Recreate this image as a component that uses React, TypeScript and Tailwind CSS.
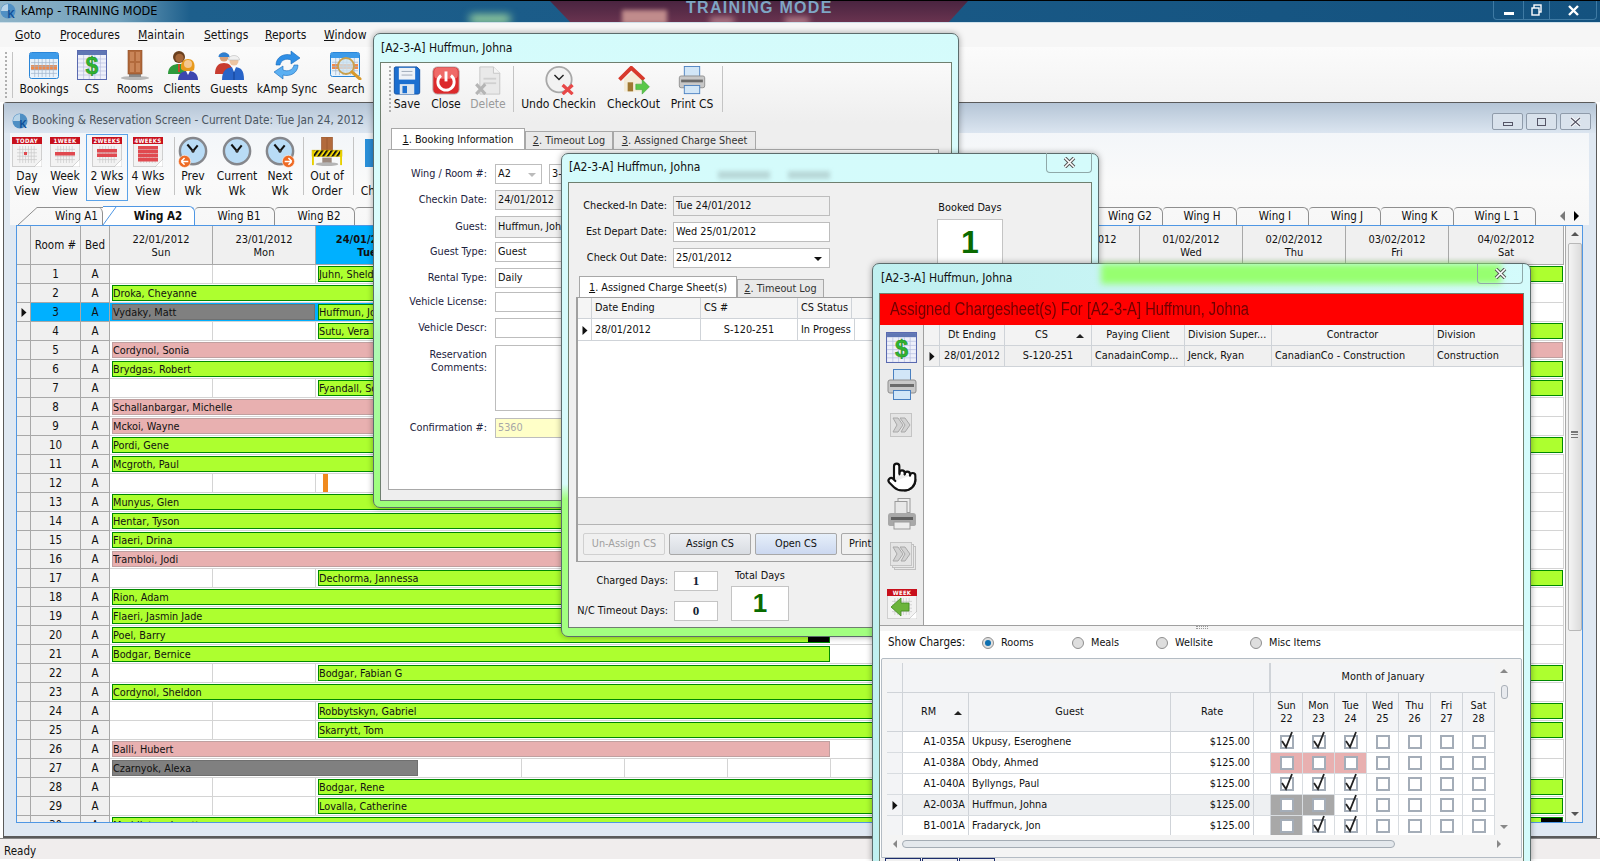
import { Pointer } from "lucide-react";

const dates = [
  ["22/01/2012", "Sun"], ["23/01/2012", "Mon"], ["24/01/2012", "Tue"], ["25/01/2012", "Wed"], ["26/01/2012", "Thu"],
  ["27/01/2012", "Fri"], ["28/01/2012", "Sat"], ["29/01/2012", "Sun"], ["30/01/2012", "Mon"], ["31/01/2012", "Tue"],
  ["01/02/2012", "Wed"], ["02/02/2012", "Thu"], ["03/02/2012", "Fri"], ["04/02/2012", "Sat"],
];

const colW = (i: number) => (i === 13 ? 115 : 103);

type Bar = { name: string; start: number; span: number; kind: "g" | "p" | "x"; tail?: boolean };
const rows: { n: number; bars: Bar[]; marker?: boolean; selected?: boolean }[] = [
  { n: 1, bars: [{ name: "Juhn, Sheldon", start: 2, span: 12, kind: "g" }] },
  { n: 2, bars: [{ name: "Droka, Cheyanne", start: 0, span: 8, kind: "g" }] },
  { n: 3, selected: true, bars: [{ name: "Vydaky, Matt", start: 0, span: 2, kind: "x" }, { name: "Huffmun, Johna", start: 2, span: 3, kind: "g" }] },
  { n: 4, bars: [{ name: "Sutu, Vera", start: 2, span: 12, kind: "g" }] },
  { n: 5, bars: [{ name: "Cordynol, Sonia", start: 0, span: 14, kind: "p" }] },
  { n: 6, bars: [{ name: "Brydgas, Robert", start: 0, span: 14, kind: "g" }] },
  { n: 7, bars: [{ name: "Fyandall, Scott", start: 2, span: 12, kind: "g" }] },
  { n: 8, bars: [{ name: "Schallanbargar, Michelle", start: 0, span: 7, kind: "p" }] },
  { n: 9, bars: [{ name: "Mckoi, Wayne", start: 0, span: 7, kind: "p" }] },
  { n: 10, bars: [{ name: "Pordi, Gene", start: 0, span: 14, kind: "g" }] },
  { n: 11, bars: [{ name: "Mcgroth, Paul", start: 0, span: 7, kind: "g" }] },
  { n: 12, marker: true, bars: [] },
  { n: 13, bars: [{ name: "Munyus, Glen", start: 0, span: 7, kind: "g" }] },
  { n: 14, bars: [{ name: "Hentar, Tyson", start: 0, span: 7, kind: "g" }] },
  { n: 15, bars: [{ name: "Flaeri, Drina", start: 0, span: 7, kind: "g" }] },
  { n: 16, bars: [{ name: "Trambloi, Jodi", start: 0, span: 7, kind: "p" }] },
  { n: 17, bars: [{ name: "Dechorma, Jannessa", start: 2, span: 12, kind: "g" }] },
  { n: 18, bars: [{ name: "Rion, Adam", start: 0, span: 7, kind: "g" }] },
  { n: 19, bars: [{ name: "Flaeri, Jasmin Jade", start: 0, span: 7, kind: "g" }] },
  { n: 20, bars: [{ name: "Poel, Barry", start: 0, span: 7, kind: "g", tail: true }] },
  { n: 21, bars: [{ name: "Bodgar, Bernice", start: 0, span: 7, kind: "g" }] },
  { n: 22, bars: [{ name: "Bodgar, Fabian G", start: 2, span: 12, kind: "g" }] },
  { n: 23, bars: [{ name: "Cordynol, Sheldon", start: 0, span: 9, kind: "g" }] },
  { n: 24, bars: [{ name: "Robbytskyn, Gabriel", start: 2, span: 12, kind: "g" }] },
  { n: 25, bars: [{ name: "Skarrytt, Tom", start: 2, span: 12, kind: "g" }] },
  { n: 26, bars: [{ name: "Balli, Hubert", start: 0, span: 7, kind: "p" }] },
  { n: 27, bars: [{ name: "Czarnyok, Alexa", start: 0, span: 3, kind: "x" }] },
  { n: 28, bars: [{ name: "Bodgar, Rene", start: 2, span: 12, kind: "g" }] },
  { n: 29, bars: [{ name: "Lovalla, Catherine", start: 2, span: 12, kind: "g" }] },
  { n: 30, bars: [{ name: "Meddleton, Janette", start: 0, span: 14, kind: "g", tail: true }] },
];

const charges = [
  { rm: "A1-035A", guest: "Ukpusy, Eseroghene", checks: [1, 1, 1, 0, 0, 0, 0], tint: [0, 0, 0] },
  { rm: "A1-038A", guest: "Obdy, Ahmed", checks: [0, 0, 0, 0, 0, 0, 0], tint: [1, 1, 1] },
  { rm: "A1-040A", guest: "Byllyngs, Paul", checks: [1, 1, 1, 0, 0, 0, 0], tint: [0, 0, 0] },
  { rm: "A2-003A", guest: "Huffmun, Johna", checks: [0, 0, 1, 0, 0, 0, 0], tint: [2, 2, 0], current: true },
  { rm: "B1-001A", guest: "Fradaryck, Jon", checks: [0, 1, 1, 0, 0, 0, 0], tint: [2, 0, 0] },
];

/* ---------- icons ---------- */

function GridLines({ x, y, w, h, nx, ny, c }: { x: number; y: number; w: number; h: number; nx: number; ny: number; c: string }) {
  const v = Array.from({ length: nx - 1 }, (_, i) => x + ((i + 1) * w) / nx);
  const z = Array.from({ length: ny - 1 }, (_, i) => y + ((i + 1) * h) / ny);
  return (
    <g stroke={c} strokeWidth="0.7">
      {v.map((a) => <line key={a} x1={a} y1={y} x2={a} y2={y + h} />)}
      {z.map((a) => <line key={a} x1={x} y1={a} x2={x + w} y2={a} />)}
    </g>
  );
}

function Calendar() {
  return (
    <svg width="30" height="30" viewBox="0 0 30 30">
      <rect x="0.5" y="2.5" width="29" height="26" rx="2" fill="#e8f2fb" stroke="#2a86d8" />
      <rect x="1" y="3" width="28" height="6" fill="#3d9be9" />
      <rect x="2" y="15" width="26" height="5" fill="#f08a4b" />
      <GridLines x={2} y={9} w={26} h={18} nx={7} ny={5} c="#9fb4cc" />
    </svg>
  );
}

function DollarSheet({ size = 30 }: { size?: number }) {
  return (
    <svg width={size} height={size} viewBox="0 0 30 30">
      <rect x="0.5" y="0.5" width="29" height="29" fill="#eef0fa" stroke="#5a6ab0" />
      <rect x="1" y="1" width="28" height="4" fill="#5f76b4" />
      <GridLines x={1} y={5} w={28} h={24} nx={5} ny={6} c="#b7bfe0" />
      <text x="15" y="24" textAnchor="middle" fontSize="23" fontWeight="700" fontFamily="Liberation Sans" fill="#2fb52f" stroke="#1c7f1c" strokeWidth="0.4">$</text>
    </svg>
  );
}

function Door() {
  return (
    <svg width="30" height="30" viewBox="0 0 30 30">
      <ellipse cx="15" cy="28" rx="14" ry="2" fill="#b8b8b8" />
      <rect x="9" y="24" width="12" height="3" fill="#8a8a8a" />
      <rect x="8" y="0" width="14" height="24" fill="#b26a3c" stroke="#8a4c24" strokeWidth="0.6" />
      <rect x="10" y="2" width="4" height="9" fill="#c98558" />
      <rect x="16" y="2" width="4" height="9" fill="#c98558" />
      <rect x="10" y="13" width="4" height="9" fill="#c98558" />
      <rect x="16" y="13" width="4" height="9" fill="#c98558" />
    </svg>
  );
}

function Clients() {
  return (
    <svg width="32" height="30" viewBox="0 0 32 30">
      <circle cx="13" cy="7" r="6" fill="#6a3f1e" />
      <circle cx="13.5" cy="8" r="4.2" fill="#a5673a" />
      <path d="M2 24 C2 16 8 14 13 14 C18 14 22 16 22 24 Z" fill="#2f9a3c" />
      <path d="M12 14 L14 14 L14 22 L12 22 Z" fill="#c84a28" />
      <path d="M15 19 C14 12 18 9 22 9 C26 9 30 12 28 20 C26 22 17 22 15 19 Z" fill="#e89a1c" />
      <circle cx="22" cy="14" r="4" fill="#f5c890" />
      <path d="M12 30 C12 23 17 21 22 21 C27 21 32 23 32 30 Z" fill="#3c46b0" />
      <path d="M20 21 L22 25 L24 21 Z" fill="#fff" />
    </svg>
  );
}

function Guests() {
  return (
    <svg width="30" height="30" viewBox="0 0 30 30">
      <circle cx="10" cy="7" r="4.5" fill="#d9a078" />
      <path d="M4.5 7 C4.5 1 15.5 1 15.5 7 Z" fill="#2f7fd0" />
      <path d="M1 24 C1 16 5 13 10 13 C15 13 19 16 19 24 Z" fill="#c83c30" />
      <circle cx="20" cy="11" r="4.5" fill="#edc4a0" />
      <path d="M14.5 10 C14.5 4 25.5 4 25.5 10 Z" fill="#f0f0f0" stroke="#b0b0b0" strokeWidth="0.5" />
      <path d="M8 30 C8 20 13 17 20 17 C27 17 30 20 30 30 Z" fill="#2864c8" />
      <path d="M18 17 L20 22 L22 17 Z" fill="#fff" />
      <line x1="20" y1="22" x2="20" y2="30" stroke="#123f8f" />
    </svg>
  );
}

function Sync() {
  return (
    <svg width="34" height="30" viewBox="0 0 34 30">
      <path d="M6 15 C6 7 14 3 21 5 L21 1 L30 8 L21 14 L21 10 C16 8 11 10 10 15 Z" fill="#2f8fe6" stroke="#1468bb" strokeWidth="0.6" />
      <path d="M28 15 C28 23 20 27 13 25 L13 29 L4 22 L13 16 L13 20 C18 22 23 20 24 15 Z" fill="#5cb0f2" stroke="#1468bb" strokeWidth="0.6" />
    </svg>
  );
}

function SearchCal() {
  return (
    <svg width="32" height="30" viewBox="0 0 32 30">
      <rect x="0.5" y="2.5" width="29" height="24" rx="2" fill="#e8f2fb" stroke="#2a86d8" />
      <rect x="1" y="3" width="28" height="5" fill="#3d9be9" />
      <rect x="2" y="14" width="26" height="5" fill="#f08a4b" />
      <GridLines x={2} y={8} w={26} h={17} nx={7} ny={4} c="#9fb4cc" />
      <circle cx="16" cy="16" r="8" fill="#cfe4f2" fillOpacity="0.75" stroke="#c9a04c" strokeWidth="1.8" />
      <line x1="22" y1="22" x2="30" y2="29" stroke="#d89a2c" strokeWidth="3" strokeLinecap="round" />
    </svg>
  );
}

function WeekSheet({ label, cells, children }: { label: string; cells?: number[][]; children?: React.ReactNode }) {
  return (
    <svg width="30" height="30" viewBox="0 0 30 30">
      <rect x="0.5" y="6.5" width="29" height="23" fill="#f3f3f3" stroke="#cfcfcf" />
      <GridLines x={5} y={9} w={20} h={17} nx={7} ny={5} c="#c8c8c8" />
      {cells?.map((c) => <rect key={c.join()} x={c[0]} y={c[1]} width={c[2]} height={c[3]} fill="#e0494f" />)}
      <rect x="0" y="0" width="30" height="7" fill="#c8101c" />
      <text x="15" y="6" textAnchor="middle" fontSize="6" fontWeight="700" fontFamily="DejaVu Sans" letterSpacing="0.3" fill="#fff">{label}</text>
      <path d="M22 30 L30 22 L30 30 Z" fill="#fff" stroke="#bbb" strokeWidth="0.6" />
      {children}
    </svg>
  );
}

function Clock({ badge }: { badge?: "l" | "r" }) {
  return (
    <svg width="32" height="32" viewBox="0 0 32 32" className="overflow-visible">
      <circle cx="16" cy="15" r="14" fill="#b9dcf6" stroke="#85878c" strokeWidth="2.6" />
      <path d="M10 8 L16 15 L21 9" fill="none" stroke="#111" strokeWidth="2.2" />
      <circle cx="16" cy="15" r="1.8" fill="#333" />
      {badge === "l" && (
        <g>
          <circle cx="7" cy="26" r="6.5" fill="#ee6a24" stroke="#fff" strokeWidth="0.6" />
          <path d="M3.5 26 L7 22.5 M3.5 26 L7 29.5 M3.5 26 L11 26" stroke="#fff" strokeWidth="1.6" fill="none" />
        </g>
      )}
      {badge === "r" && (
        <g>
          <circle cx="25" cy="26" r="6.5" fill="#ee6a24" stroke="#fff" strokeWidth="0.6" />
          <path d="M28.5 26 L25 22.5 M28.5 26 L25 29.5 M28.5 26 L21 26" stroke="#fff" strokeWidth="1.6" fill="none" />
        </g>
      )}
    </svg>
  );
}

function OutOfOrder() {
  return (
    <svg width="32" height="32" viewBox="0 0 32 32">
      <defs>
        <pattern id="hazard" width="5" height="6" patternUnits="userSpaceOnUse" patternTransform="skewX(-35)">
          <rect width="5" height="6" fill="#f4d800" />
          <rect width="2.5" height="6" fill="#111" />
        </pattern>
      </defs>
      <rect x="10" y="0" width="12" height="15" fill="#b26a3c" stroke="#8a4c24" strokeWidth="0.5" />
      <line x1="16" y1="1" x2="16" y2="15" stroke="#8a4c24" strokeWidth="0.5" />
      <rect x="11" y="22" width="10" height="6" fill="#9c8a80" />
      <ellipse cx="16" cy="29" rx="12" ry="2" fill="#b5b5b5" />
      <rect x="0" y="14" width="32" height="7" fill="url(#hazard)" stroke="#c8b000" strokeWidth="0.5" />
      <rect x="0" y="14" width="2" height="16" fill="#e8d000" />
      <rect x="30" y="14" width="2" height="16" fill="#e8d000" />
    </svg>
  );
}

function Save() {
  return (
    <svg width="30" height="32" viewBox="0 0 30 32">
      <path d="M2 1 H26 L29 4 V29 Q29 31 27 31 H3 Q1 31 1 29 V2 Z" fill="#1c6fd0" stroke="#114e9f" />
      <rect x="6" y="2" width="18" height="13" fill="#eef2f7" />
      <line x1="9" y1="6" x2="21" y2="6" stroke="#9aa6b5" />
      <line x1="9" y1="10" x2="21" y2="10" stroke="#9aa6b5" />
      <rect x="7" y="20" width="16" height="11" fill="#dfe6ee" />
      <rect x="10" y="22" width="5" height="8" fill="#1c6fd0" />
    </svg>
  );
}

function PowerBtn() {
  return (
    <svg width="30" height="32" viewBox="0 0 30 32">
      <rect x="0.5" y="1" width="29" height="30" rx="5" fill="#dc2a2c" stroke="#b8b0b0" />
      <rect x="2" y="2" width="26" height="12" rx="4" fill="#ef6a68" />
      <path d="M9.5 10.5 A9 9 0 1 0 20.5 10.5" fill="none" stroke="#fff" strokeWidth="3.2" />
      <line x1="15" y1="6" x2="15" y2="17" stroke="#fff" strokeWidth="3.2" />
    </svg>
  );
}

function DeleteDoc() {
  return (
    <svg width="30" height="32" viewBox="0 0 30 32">
      <path d="M6 1 H21 L28 8 V31 H6 Z" fill="#e9e9e9" stroke="#c4c4c4" />
      <path d="M21 1 V8 H28" fill="#f5f5f5" stroke="#c4c4c4" />
      <line x1="10" y1="14" x2="24" y2="14" stroke="#d0d0d0" strokeWidth="2" />
      <line x1="10" y1="19" x2="24" y2="19" stroke="#d0d0d0" strokeWidth="2" />
      <path d="M2 20 L12 31 M12 20 L2 31" stroke="#b5b5b5" strokeWidth="3.4" />
    </svg>
  );
}

function UndoClock() {
  return (
    <svg width="32" height="32" viewBox="0 0 32 32">
      <circle cx="16" cy="15" r="14" fill="#f2f2f2" stroke="#a8a8a8" strokeWidth="2" />
      <path d="M11 10 L16 15 L21 10" fill="none" stroke="#222" strokeWidth="1.6" />
      <path d="M20 21 L31 31 M31 21 L20 31" stroke="#e84848" strokeWidth="3.6" />
    </svg>
  );
}

function CheckOut() {
  return (
    <svg width="34" height="32" viewBox="0 0 34 32">
      <path d="M6 14 L17 5 L25 13 V28 H6 Z" fill="#f4ecd8" />
      <path d="M1 15 L14 2 L28 15" fill="none" stroke="#d83a2c" strokeWidth="4.2" />
      <rect x="10" y="18" width="6" height="10" fill="#a07830" />
      <path d="M19 20 H26 V15 L34 23 L26 31 V26 H19 Z" fill="#58c848" stroke="#3a9c30" strokeWidth="0.6" />
    </svg>
  );
}

function PrinterIcon({ size = 30 }: { size?: number }) {
  return (
    <svg width={size} height={size} viewBox="0 0 30 32">
      <rect x="6.5" y="0.5" width="17" height="11" fill="#d2e6f7" stroke="#4a80c0" />
      <path d="M1 13 Q1 11 3 11 H27 Q29 11 29 13 V22 Q29 24 27 24 H3 Q1 24 1 22 Z" fill="#c8c8c8" stroke="#8e8e8e" />
      <rect x="3" y="15" width="24" height="3" fill="#6b6b6b" />
      <rect x="6.5" y="21.5" width="17" height="9" fill="#d2e6f7" stroke="#4a80c0" />
    </svg>
  );
}

function PrinterGray() {
  return (
    <svg width="30" height="32" viewBox="0 0 30 32">
      <rect x="11" y="0.5" width="12" height="14" fill="#eee" stroke="#9a9a9a" />
      <rect x="8" y="3.5" width="12" height="14" fill="#e8e8e8" stroke="#9a9a9a" />
      <path d="M1 18 Q1 15 4 15 H26 Q29 15 29 18 V26 Q29 28 26 28 H4 Q1 28 1 26 Z" fill="#a8a8a8" />
      <rect x="4" y="19" width="22" height="3" fill="#606060" />
      <rect x="7" y="24" width="16" height="7" fill="#ececec" stroke="#9a9a9a" />
    </svg>
  );
}

function Forward({ stack }: { stack?: boolean }) {
  return (
    <svg width="28" height="28" viewBox="0 0 28 28">
      {stack && <rect x="5.5" y="4.5" width="21" height="23" fill="#e8e8e8" stroke="#c0c0c0" />}
      {stack && <rect x="3.5" y="2.5" width="21" height="23" fill="#e8e8e8" stroke="#c0c0c0" />}
      <rect x="1.5" y="0.5" width="21" height="23" fill="#e4e4e4" stroke="#c4c4c4" />
      <path d="M4 5 H9 L14 12 L9 19 H4 L8 12 Z M11 5 L16 5 L21 12 L16 19 H12 L16 12 Z" fill="#d2d2d2" stroke="#a8a8a8" />
    </svg>
  );
}

function WeekBack() {
  return (
    <WeekSheet label="WEEK">
      <path d="M4 18 L14 9 V14 H22 V22 H14 V27 Z" fill="#6cb43c" stroke="#3f8a20" strokeWidth="0.8" />
    </WeekSheet>
  );
}

function KLogo() {
  return (
    <svg width="17" height="17" viewBox="0 0 17 17">
      <circle cx="8" cy="8" r="7.5" fill="#4f8fc4" />
      <path d="M8 1 A7 7 0 0 0 1 8 L8 8 Z" fill="#b8d4e8" />
      <text x="11" y="15" textAnchor="middle" fontSize="10" fontWeight="700" fontFamily="Liberation Sans" fill="#0f4f98">K</text>
    </svg>
  );
}

const Arrow = () => (
  <svg width="6" height="9" viewBox="0 0 6 9"><path d="M0.5 0 L5.5 4.5 L0.5 9 Z" fill="#111" /></svg>
);

/* ---------- shared bits ---------- */

function ToolItem({ w, label, icon, h = 30, dim }: { w: number; label: string; icon: React.ReactNode; h?: number; dim?: boolean }) {
  return (
    <div className="flex flex-col items-center shrink-0" style={{ width: w }}>
      <div className="flex items-end justify-center [&>svg]:max-h-full" style={{ height: h }}>{icon}</div>
      <div className={`mt-[2px] text-center text-[12px] leading-[15px] whitespace-pre ${dim ? "text-[#9a9a9a]" : "text-[#111]"}`}>{label}</div>
    </div>
  );
}

const Sep = ({ w, h = "h-[58px]" }: { w: number; h?: string }) => (
  <div className="shrink-0 flex justify-center" style={{ width: w }}>
    <div className={`w-px bg-[#c4c4c4] ${h}`} />
  </div>
);

function TabBtn({ active, n, text, w }: { active?: boolean; n: string; text: string; w: number }) {
  return (
    <div
      className={`shrink-0 flex items-center justify-center pt-[2px] border border-b-0 border-[#a8a8a8] ${active ? "bg-white h-[21px] z-10 text-[#111]" : "bg-[#e9e9e9] h-[18px] text-[#333]"}`}
      style={{ width: w }}
    >
      <span><u>{n}</u>. {text}</span>
    </div>
  );
}

function Box({ w, h = 20, children, bg = "bg-white", cls = "" }: { w?: number; h?: number; children?: React.ReactNode; bg?: string; cls?: string }) {
  return (
    <div className={`flex items-center px-[2px] pt-px border border-[#bdbdbd] shrink-0 whitespace-nowrap overflow-hidden ${bg} ${cls}`} style={{ width: w, height: h }}>
      {children}
    </div>
  );
}

function CloseBtn({ w = 46 }: { w?: number }) {
  return (
    <div className="h-[20px] flex items-center justify-center border border-t-0 border-[#8fa8a8] rounded-b-[4px]" style={{ width: w }}>
      <svg width="13" height="11" viewBox="0 0 13 11"><path d="M2 1 L11 10 M11 1 L2 10" stroke="#555" strokeWidth="3.6" /><path d="M2 1 L11 10 M11 1 L2 10" stroke="#fff" strokeWidth="1.6" /></svg>
    </div>
  );
}

function HeadCell({ w, children, cls = "" }: { w?: number; children?: React.ReactNode; cls?: string }) {
  return (
    <div className={`flex items-center shrink-0 border-r border-[#cfd3d8] px-[3px] pt-px whitespace-nowrap overflow-hidden ${cls}`} style={{ width: w }}>
      {children}
    </div>
  );
}

function Radio({ on, label, w }: { on?: boolean; label: string; w: number }) {
  return (
    <div className="flex items-center gap-[7px] shrink-0" style={{ width: w }}>
      <span className="w-[12px] h-[12px] rounded-full border border-[#8f8f8f] bg-[#dedede] flex items-center justify-center">
        {on && <span className="w-[6px] h-[6px] rounded-full bg-[#0c6fb0]" />}
      </span>
      <span>{label}</span>
    </div>
  );
}

function Check({ on }: { on: number }) {
  return (
    <span className="relative w-[14px] h-[14px] border-2 border-[#a4adb8] bg-white block">
      {on === 1 && (
        <svg width="14" height="18" viewBox="0 0 14 18" className="absolute left-[-2px] top-[-6px]">
          <path d="M2 10 L6 16 L12 1" fill="none" stroke="#222" strokeWidth="1.8" />
        </svg>
      )}
    </span>
  );
}

/* ---------- main window chrome ---------- */

function TitleBar() {
  return (
    <div className="relative h-[23px] shrink-0 border-t border-black border-b border-b-[#cfe0ea] bg-[linear-gradient(90deg,#8fb4c8_0px,#6f9fba_120px,#1d5f8c_190px,#14527f_1600px)] overflow-hidden">
      <div className="absolute left-[470px] top-[14px] w-[40px] h-[8px] bg-[#a8e0a0] blur-[4px]" />
      <svg width="420" height="22" viewBox="0 0 420 22" className="absolute left-[550px] top-0">
        <defs>
          <linearGradient id="tm" x1="0" y1="0" x2="0" y2="1"><stop offset="0" stopColor="#4a2440" /><stop offset="1" stopColor="#6a3450" /></linearGradient>
        </defs>
        <path d="M0 0 H418 L398 22 H21 Z" fill="url(#tm)" />
      </svg>
      <div className="absolute left-[622px] top-[9px] w-[45px] h-[14px] bg-[#c08c8c] blur-[2px]" />
      <div className="absolute left-[710px] top-[16px] w-[24px] h-[8px] bg-[#b07a88] blur-[3px]" />
      <div className="absolute left-[785px] top-[16px] w-[24px] h-[8px] bg-[#b07a88] blur-[3px]" />
      <div className="absolute left-0 top-[1px] flex items-center gap-[4px]">
        <KLogo />
        <span className="text-[12.6px] text-black">kAmp - TRAINING MODE</span>
      </div>
      <div className="absolute left-[686px] top-[-3px] font-['Liberation_Sans',sans-serif] font-bold text-[16px] tracking-[1.3px] text-[#7fa6c4] leading-[20px]">TRAINING MODE</div>
      <div className="absolute right-[3px] top-0 h-[19px] w-[104px] flex border border-t-0 border-[#3f7aa3] rounded-b-[4px]">
        <div className="w-[30px] flex items-center justify-center border-r border-[#3f7aa3]"><span className="w-[10px] h-[3px] mt-[6px] bg-white" /></div>
        <div className="w-[26px] flex items-center justify-center border-r border-[#3f7aa3]">
          <svg width="11" height="12" viewBox="0 0 11 12"><rect x="3" y="1" width="7" height="7" fill="none" stroke="#fff" strokeWidth="1.4" /><rect x="1" y="4" width="7" height="7" fill="#14527f" stroke="#fff" strokeWidth="1.4" /></svg>
        </div>
        <div className="flex-1 flex items-center justify-center">
          <svg width="11" height="11" viewBox="0 0 11 11"><path d="M1 1 L10 10 M10 1 L1 10" stroke="#fff" strokeWidth="2.4" /></svg>
        </div>
      </div>
    </div>
  );
}

const menuW = [27, 60, 47, 44, 41, 45];

function MenuBar() {
  const items = [["G", "oto", 15], ["P", "rocedures", 60], ["M", "aintain", 138], ["S", "ettings", 204], ["R", "eports", 265], ["W", "indow", 324]] as const;
  return (
    <div className="h-[24px] shrink-0 bg-[#f6f6f6] flex items-center text-[#111] text-[12px]">
      {items.map(([a, b, x], i) => (
        <span key={a} style={{ marginLeft: i === 0 ? x : x - items[i - 1][2] - menuW[i - 1], width: menuW[i] }} className="inline-block shrink-0 whitespace-nowrap">
          <u>{a}</u>{b}
        </span>
      ))}
    </div>
  );
}

function MainTools() {
  return (
    <div className="h-[55px] shrink-0 bg-[linear-gradient(180deg,#fbfbfb,#f3f3f3)] flex pt-[3px]">
      <div className="w-[12px] shrink-0 flex justify-center"><div className="w-[2px] h-[46px] mt-[2px] border-l-2 border-dotted border-[#b0b0b0]" /></div>
      <div className="w-px h-[46px] mt-[2px] bg-[#c4c4c4] mr-[3px]" />
      <ToolItem w={56} label="Bookings" icon={<Calendar />} />
      <ToolItem w={40} label="CS" icon={<DollarSheet />} />
      <ToolItem w={46} label="Rooms" icon={<Door />} />
      <ToolItem w={48} label="Clients" icon={<Clients />} />
      <ToolItem w={46} label="Guests" icon={<Guests />} />
      <ToolItem w={70} label="kAmp Sync" icon={<Sync />} />
      <ToolItem w={48} label="Search" icon={<SearchCal />} />
    </div>
  );
}

/* ---------- booking screen ---------- */

function ScreenTools() {
  return (
    <div className="h-[74px] shrink-0 flex pt-[4px]">
      <ToolItem w={34} label={"Day\nView"} icon={<WeekSheet label="TODAY" cells={[[12, 15, 3, 3]]} />} />
      <ToolItem w={42} label={"Week\nView"} icon={<WeekSheet label="1WEEK" cells={[[5, 15, 20, 3.5]]} />} />
      <div className="relative shrink-0">
        <div className="absolute inset-x-0 top-[-3px] h-[67px] border border-[#5aa2e8]" />
        <ToolItem w={42} label={"2 Wks\nView"} icon={<WeekSheet label="2WEEKS" cells={[[5, 12, 20, 3.5], [5, 16.5, 20, 3.5]]} />} />
      </div>
      <ToolItem w={40} label={"4 Wks\nView"} icon={<WeekSheet label="4WEEKS" cells={[[5, 9, 20, 3.5], [5, 13, 20, 3.5], [5, 17, 20, 3.5], [5, 21, 20, 3.5]]} />} />
      <Sep w={12} />
      <ToolItem w={26} label={"Prev\nWk"} icon={<Clock badge="l" />} />
      <ToolItem w={62} label={"Current\nWk"} icon={<Clock />} />
      <ToolItem w={24} label={"Next\nWk"} icon={<Clock badge="r" />} />
      <Sep w={22} />
      <ToolItem w={26} label={"Out of\nOrder"} icon={<OutOfOrder />} />
      <Sep w={26} />
      <ToolItem w={28} label={"No\nCharge"} icon={<span className="block w-[30px] h-[28px] bg-[#2a8fd8]" />} />
    </div>
  );
}

function WingTabs() {
  const tabs: [string, number][] = [
    ["Wing A1", 85], ["Wing A2", 92], ["Wing B1", 80], ["Wing B2", 80], ["Wing C1", 82], ["Wing C2", 82], ["Wing D1", 82], ["Wing D2", 82],
    ["Wing E1", 82], ["Wing E2", 82], ["Wing F1", 82], ["Wing F2", 82], ["Wing G1", 78], ["Wing G2", 74], ["Wing H", 74], ["Wing I", 72], ["Wing J", 72], ["Wing K", 73], ["Wing L 1", 82],
  ];
  return (
    <div className="h-[18px] shrink-0 flex items-end relative pl-[8px] text-[11.5px]">
      {tabs.map(([t, w], i) => (
        <div
          key={t}
          className={`relative shrink-0 h-[18px] flex items-center justify-center pt-px border-t border-r rounded-tr-[6px] ${i === 1 ? "font-bold bg-white border-[#4f97e4] h-[19px] z-10 pl-[19px]" : i === 0 ? "border-[#8f8f8f] pl-[33px] border-t-0" : i > 13 ? "border-[#8f8f8f] rounded-tl-[4px] pl-[5px]" : "border-[#8f8f8f] rounded-tl-[4px] pl-[9px]"}`}
          style={{ width: w }}
        >
          {i < 2 && (
            <svg width="19" height="18" viewBox="0 0 19 18" className="absolute left-0 top-0 overflow-visible">
              <path d={i === 0 ? "M0 18 L19 0.5 H85" : "M0 18 L13 0"} stroke={i === 1 ? "#4f97e4" : "#8f8f8f"} fill="none" />
            </svg>
          )}
          <span className="whitespace-nowrap">{t}</span>
        </div>
      ))}
      <div className="absolute left-[1550px] top-[4px] flex gap-[9px] items-center">
        <span className="w-0 h-0 border-y-[5px] border-y-transparent border-r-[5px] border-r-[#7a7a7a]" />
        <span className="w-0 h-0 border-y-[5px] border-y-transparent border-l-[5px] border-l-black" />
      </div>
    </div>
  );
}

function SideCell({ w, children, blue }: { w: number; children?: React.ReactNode; blue?: boolean }) {
  return (
    <div className={`shrink-0 flex items-center justify-center pt-px text-[11.5px] border-r border-b border-[#a8a8a8] ${blue ? "bg-[#00b0ff]" : "bg-[#f0f0f0]"}`} style={{ width: w }}>
      {children}
    </div>
  );
}

const barCls = { g: "bg-[#adff2f] border-[#008a00]", p: "bg-[#e8b0b0] border-[#c0a0a0]", x: "bg-[#808080] border-[#707070]" };

function BookRow({ row }: { row: (typeof rows)[number] }) {
  const cells: React.ReactNode[] = [];
  let col = 0;
  const bars = [...row.bars];
  while (col < 14) {
    const b = bars.find((x) => x.start === col);
    if (b) {
      let w = 0;
      for (let i = col; i < col + b.span; i++) w += colW(i);
      cells.push(
        <div key={col} className={`shrink-0 flex py-[1px] pl-[2px] pr-px ${row.selected ? "bg-[#00b0ff]" : ""}`} style={{ width: w }}>
          <div className={`flex-1 min-w-0 h-[16px] border flex items-center leading-none overflow-hidden ${barCls[b.kind]}`}>
            <span className="whitespace-nowrap flex-1 pt-[2px]">{b.name}</span>
            {b.tail && <span className="w-[21px] h-full bg-black shrink-0" />}
          </div>
        </div>
      );
      col += b.span;
    } else {
      cells.push(
        <div key={col} className="shrink-0 border-r border-[#d4d4d4] pl-[7px]" style={{ width: colW(col) }}>
          {row.marker && col === 2 && <div className="w-[5px] h-[18px] bg-[#f08a1e]" />}
        </div>
      );
      col += 1;
    }
  }
  return (
    <div className="h-[19px] shrink-0 flex">
      <SideCell w={14}>{row.selected && <Arrow />}</SideCell>
      <SideCell w={50} blue={row.selected}>{row.n}</SideCell>
      <SideCell w={29} blue={row.selected}>A</SideCell>
      <div className="flex border-b border-[#d4d4d4] bg-white">{cells}</div>
    </div>
  );
}

function BookingGrid() {
  return (
    <div className="h-[598px] shrink-0 flex border border-[#4f97e4] overflow-hidden bg-white">
      <div className="flex flex-col w-[1548px] shrink-0 overflow-hidden">
        <div className="h-[39px] shrink-0 flex">
          <SideCell w={14} />
          <SideCell w={50}>Room #</SideCell>
          <SideCell w={29}>Bed</SideCell>
          {dates.map(([d, w], i) => (
            <div
              key={d}
              className={`shrink-0 flex flex-col items-center justify-center pt-px text-[11px] leading-[13px] border-r border-b border-[#a8a8a8] ${i === 2 ? "bg-[#00b0ff] font-bold" : "bg-[#f0f0f0]"}`}
              style={{ width: colW(i) }}
            >
              <span>{d}</span>
              <span>{w}</span>
            </div>
          ))}
        </div>
        {rows.map((r) => <BookRow key={r.n} row={r} />)}
      </div>
      <div className="w-[18px] shrink-0 bg-[#f0f0f0] border-l border-[#a8a8a8] flex flex-col items-center pb-[6px] pt-[6px]">
        <span className="w-0 h-0 border-x-[4px] border-x-transparent border-b-[4px] border-b-[#555]" />
        <div className="mt-[7px] w-[14px] h-[388px] rounded-[2px] border border-[#b8b8b8] bg-[linear-gradient(90deg,#f4f4f4,#dcdcdc)] flex items-center justify-center">
          <span className="w-[7px] h-[7px] mt-[-5px] border-y border-[#777] bg-[linear-gradient(180deg,#777_1px,transparent_1px,transparent_2px,#777_2px,#777_3px,transparent_3px)]" />
        </div>
        <span className="mt-auto w-0 h-0 border-x-[4px] border-x-transparent border-t-[4px] border-t-[#555]" />
      </div>
    </div>
  );
}

function BookingScreen() {
  return (
    <div className="h-[736px] shrink-0 mx-[3px] border border-[#5a5a5a] border-b-2 rounded-t-[4px] bg-[#dfe8f2] flex flex-col">
      <div className="h-[30px] shrink-0 flex items-center bg-[linear-gradient(180deg,#b5c5d6,#dbe5f0)] pl-[8px] pt-[6px] relative">
        <KLogo />
        <span className="ml-[3px] text-[#4a5560] text-[11.7px]">Booking &amp; Reservation Screen - Current Date: Tue Jan 24, 2012</span>
        <div className="absolute right-[5px] top-[10px] flex gap-[3px]">
          {[0, 1, 2].map((k) => (
            <div key={k} className="w-[31px] h-[17px] rounded-[2px] border border-[#8f9baa] bg-[#d9e2ec] flex items-center justify-center">
              {k === 0 && <span className="block w-[10px] h-[4px] mt-[4px] border border-[#556]" />}
              {k === 1 && <span className="block w-[9px] h-[8px] border border-[#556]" />}
              {k === 2 && <svg width="11" height="10" viewBox="0 0 11 10"><path d="M1 1 L10 9 M10 1 L1 9" stroke="#fff" strokeWidth="3" /><path d="M1 1 L10 9 M10 1 L1 9" stroke="#556" strokeWidth="1.2" /></svg>}
            </div>
          ))}
        </div>
      </div>
      <div className="ml-[6px] mr-[7px] bg-[linear-gradient(180deg,#f3f6f9,#fafafa_50px,#f7f7f7_92px)] flex flex-col">
        <ScreenTools />
        <WingTabs />
      </div>
      <div className="ml-[12px] mr-[13px]">
        <BookingGrid />
      </div>
    </div>
  );
}

/* ---------- floating windows ---------- */

function BookingWindow() {
  const Field = ({ label, mt, children }: { label: string; mt: number; children: React.ReactNode }) => (
    <div className="flex items-center" style={{ marginTop: mt }}>
      <span className="w-[98px] pt-px text-right text-[#1c2340] shrink-0">{label}</span>
      <div className="ml-[8px]">{children}</div>
    </div>
  );
  return (
    <div className="absolute left-[373px] top-[33px] w-[586px] h-[475px] rounded-[7px] border border-[#5c6c6c] shadow-[0_0_6px_rgba(0,0,0,0.35)] bg-[linear-gradient(180deg,#d4fbfb_0,#dcfdfd_230px,#b0f8b8_300px,#9dff78_100%)] px-[6px] pb-[6px] flex flex-col">
      <div className="h-[28px] shrink-0 flex items-center pl-px text-[12px] text-[#111]">[A2-3-A] Huffmun, Johna</div>
      <div className="flex-1 border border-[#6f7f6f] bg-[linear-gradient(180deg,#fafafa,#eeeeee_60px)] flex flex-col">
        <div className="h-[66px] shrink-0 flex pt-[3px]">
          <div className="w-[10px] shrink-0 flex justify-center"><div className="w-[2px] h-[46px] ml-[8px] border-l-2 border-dotted border-[#b0b0b0]" /></div>
          <ToolItem w={32} label="Save" icon={<Save />} h={29} />
          <ToolItem w={46} label="Close" icon={<PowerBtn />} h={29} />
          <ToolItem w={38} label="Delete" icon={<DeleteDoc />} h={29} dim />
          <Sep w={12} h="h-[46px]" />
          <ToolItem w={79} label="Undo Checkin" icon={<UndoClock />} h={29} />
          <ToolItem w={71} label="CheckOut" icon={<CheckOut />} h={29} />
          <ToolItem w={46} label="Print CS" icon={<PrinterIcon />} h={29} />
          <Sep w={14} h="h-[46px]" />
        </div>
        <div className="flex items-end ml-[10px] h-[20px] shrink-0">
          <TabBtn active n="1" text="Booking Information" w={134} />
          <TabBtn n="2" text="Timeout Log" w={88} />
          <TabBtn n="3" text="Assigned Charge Sheet" w={143} />
        </div>
        <div className="ml-[7px] mr-[12px] h-[341px] shrink-0 bg-white border border-[#a8a8a8] pt-[14px] overflow-hidden">
          <Field label="Wing / Room #:" mt={0}>
            <div className="flex gap-[7px]">
              <Box w={47} cls="justify-between pr-[5px]"><span>A2</span><span className="w-0 h-0 border-x-[4px] border-x-transparent border-t-[4px] border-t-[#bbb]" /></Box>
              <Box w={80}>3-A</Box>
            </div>
          </Field>
          <Field label="Checkin Date:" mt={6}><Box w={300} bg="bg-[#f0f0f0]">24/01/2012</Box></Field>
          <Field label="Guest:" mt={6}><Box w={300} h={22} bg="bg-[#f0f0f0]">Huffmun, Johna</Box></Field>
          <Field label="Guest Type:" mt={4}><Box w={300}>Guest</Box></Field>
          <Field label="Rental Type:" mt={6}><Box w={300}>Daily</Box></Field>
          <Field label="Vehicle License:" mt={4}><Box w={300} /></Field>
          <Field label="Vehicle Descr:" mt={6}><Box w={300} /></Field>
          <div className="flex mt-[7px]">
            <span className="w-[98px] text-right text-[#1c2340] leading-[13px] pt-[3px] shrink-0">Reservation<br />Comments:</span>
            <div className="ml-[8px]"><Box w={300} h={66} /></div>
          </div>
          <Field label="Confirmation #:" mt={7}><Box w={300} bg="bg-[#ffffc8]"><span className="text-[#a8a8a8]">5360</span></Box></Field>
        </div>
      </div>
    </div>
  );
}

function CheckinWindow() {
  const Field = ({ label, bg, children }: { label: string; bg?: string; children: React.ReactNode }) => (
    <div className="flex items-center">
      <span className="w-[98px] pt-px text-right shrink-0">{label}</span>
      <div className="ml-[6px]"><Box w={157} bg={bg} cls="pl-[2px]">{children}</Box></div>
    </div>
  );
  return (
    <div className="absolute left-[561px] top-[153px] w-[538px] h-[484px] rounded-[7px] border border-[#5c6c6c] shadow-[0_0_6px_rgba(0,0,0,0.35)] bg-[linear-gradient(180deg,#d4fbfb_0,#d8fbfb_330px,#a2ff80_345px,#a2ff80_100%)] px-[6px] pb-[8px] flex flex-col">
      <div className="h-[28px] shrink-0 flex items-center pl-px pb-[2px] relative text-[12px] text-[#111]">
        [A2-3-A] Huffmun, Johna
        <div className="absolute left-[150px] top-[17px] w-[52px] h-[8px] bg-[#b8d8d8] blur-[2px]" />
        <div className="absolute left-[220px] top-[17px] w-[42px] h-[8px] bg-[#b8d8d8] blur-[2px]" />
        <div className="absolute right-0 top-[-1px]"><CloseBtn /></div>
      </div>
      <div className="flex-1 border border-[#6f7f6f] bg-[#f0f0f0] flex flex-col">
        <div className="h-[94px] shrink-0 flex">
          <div className="pt-[13px] flex flex-col gap-[6px]">
            <Field label="Checked-In Date:" bg="bg-[#f0f0f0]">Tue 24/01/2012</Field>
            <Field label="Est Depart Date:">Wed 25/01/2012</Field>
            <Field label="Check Out Date:">
              <span className="flex-1">25/01/2012</span>
              <span className="w-0 h-0 mr-[5px] border-x-[4px] border-x-transparent border-t-[4px] border-t-[#111]" />
            </Field>
          </div>
          <div className="ml-[107px] pt-[18px] w-[66px] flex flex-col items-center shrink-0">
            <span className="whitespace-nowrap leading-[14px]">Booked Days</span>
            <div className="mt-[4px] w-[66px] h-[60px] bg-white border border-[#c4c4c4] flex items-start justify-center font-['Liberation_Sans',sans-serif] font-bold text-[32px] leading-[44px] text-[#0a6a00]">1</div>
          </div>
        </div>
        <div className="flex items-end ml-[10px] h-[20px] shrink-0">
          <TabBtn active n="1" text="Assigned Charge Sheet(s)" w={158} />
          <TabBtn n="2" text="Timeout Log" w={87} />
        </div>
        <div className="ml-[7px] mr-[4px] h-[265px] shrink-0 border border-[#a0a0a0] border-l-2 bg-white flex flex-col">
          <div className="h-[21px] shrink-0 flex bg-[#f5f5f5] border-b border-[#cfd3d8]">
            <HeadCell w={14} />
            <HeadCell w={109}>Date Ending</HeadCell>
            <HeadCell w={97}>CS #</HeadCell>
            <HeadCell>CS Status</HeadCell>
          </div>
          <div className="h-[22px] shrink-0 flex border-b border-[#cfd3d8]">
            <HeadCell w={14} cls="justify-center"><Arrow /></HeadCell>
            <HeadCell w={109}>28/01/2012</HeadCell>
            <HeadCell w={97} cls="justify-center">S-120-251</HeadCell>
            <HeadCell>In Progess</HeadCell>
          </div>
          <div className="flex-1" />
          <div className="h-[28px] shrink-0 bg-[#ececec] border-y border-[#b4b4b4]" />
          <div className="h-[36px] shrink-0 flex items-center gap-[4px] pl-[5px] pt-[2px] bg-[#f0f0f0]">
            {[["Un-Assign CS", "justify-center bg-[#f0f0f0] text-[#a0a0a0] border-[#d0d0d0]"], ["Assign CS", "justify-center bg-[linear-gradient(180deg,#eef0f4,#d8dce2)] border-[#a8a8a8]"], ["Open CS", "justify-center bg-[linear-gradient(180deg,#e6effa,#ccd8f0)] border-[#a8a8a8]"], ["Print", "pl-[7px] bg-[#f0f0f0] border-[#a8a8a8]"]].map(([t, c]) => (
              <div key={t} className={`w-[82px] h-[22px] pt-px rounded-[2px] border shrink-0 flex items-center ${c}`}>{t}</div>
            ))}
          </div>
        </div>
        <div className="flex-1 flex">
          <div className="flex flex-col gap-[10px] pt-[9px]">
            {[["Charged Days:", "1"], ["N/C Timeout Days:", "0"]].map(([l, v]) => (
              <div key={l} className="flex items-center">
                <span className="w-[99px] pt-px text-right whitespace-nowrap shrink-0">{l}</span>
                <div className="ml-[6px] w-[44px] h-[20px] bg-white border border-[#c4c4c4] flex items-center justify-center font-['Liberation_Serif',serif] font-bold text-[13px] text-[#123]">{v}</div>
              </div>
            ))}
          </div>
          <div className="ml-[13px] pt-[6px] w-[58px] flex flex-col items-center">
            <span className="whitespace-nowrap leading-[16px]">Total Days</span>
            <div className="mt-[2px] w-[58px] h-[35px] bg-white border border-[#c4c4c4] flex items-center justify-center font-['Liberation_Sans',sans-serif] font-bold text-[26px] text-[#0a6a00]">1</div>
          </div>
        </div>
      </div>
    </div>
  );
}

function ChargeWindow() {
  return (
    <div className="absolute left-[872px] top-[263px] w-[659px] h-[600px] rounded-t-[7px] border border-[#5c6c6c] shadow-[0_0_6px_rgba(0,0,0,0.35)] bg-[linear-gradient(90deg,#c0f0f0,#d4fbfb)] px-[6px] flex flex-col">
      <div className="h-[29px] shrink-0 flex items-center pl-[2px] pb-[2px] relative text-[12px] text-[#111]">
        <div className="absolute left-[222px] top-0 w-[400px] h-[20px] bg-[#97ff70] blur-[3px]" />
        <span className="relative">[A2-3-A] Huffmun, Johna</span>
        <div className="absolute right-[1px] top-0"><CloseBtn /></div>
      </div>
      <div className="flex-1 border border-[#6f7f6f] bg-white flex flex-col min-h-0">
        <div className="h-[31px] shrink-0 bg-[#ff0000] flex items-center pl-[10px] font-['Liberation_Sans',sans-serif] [font-stretch:normal] text-[18px] text-[#700000] whitespace-nowrap overflow-hidden">
          <span className="inline-block origin-left scale-x-[0.82]">Assigned Chargesheet(s) For [A2-3-A] Huffmun, Johna</span>
        </div>
        <div className="h-[301px] shrink-0 flex border-b border-[#a0a0a0]">
          <div className="w-[44px] shrink-0 bg-[#ececec] border-r border-[#a0a0a0] flex flex-col items-center pt-[7px] gap-[6px]">
            <DollarSheet size={31} />
            <PrinterIcon size={32} />
            <div className="mt-[6px] ml-[3px]"><Forward /></div>
            <div className="mt-[14px]"><Pointer size={32} fill="#fff" stroke="#111" strokeWidth={1.6} /></div>
            <div className="mt-[-1px]"><PrinterGray /></div>
            <div className="mt-[6px] ml-[3px]"><Forward stack /></div>
            <div className="mt-[13px]"><WeekBack /></div>
          </div>
          <div className="flex-1 flex flex-col min-w-0">
            <div className="h-[21px] shrink-0 flex bg-[#f3f3f3] border-b border-[#cfd3d8]">
              <HeadCell w={16} />
              <HeadCell w={65} cls="justify-center">Dt Ending</HeadCell>
              <HeadCell w={87} cls="relative justify-center pr-[16px]">CS<span className="absolute right-[7px] w-0 h-0 border-x-[4px] border-x-transparent border-b-[4px] border-b-[#222]" /></HeadCell>
              <HeadCell w={93} cls="justify-center">Paying Client</HeadCell>
              <HeadCell w={87}>Division Super...</HeadCell>
              <HeadCell w={162} cls="justify-center">Contractor</HeadCell>
              <HeadCell w={89}>Division</HeadCell>
            </div>
            <div className="h-[21px] shrink-0 flex bg-[#f0f0f0] border-b border-[#cfd3d8]">
              <HeadCell w={16} cls="justify-center"><Arrow /></HeadCell>
              <HeadCell w={65} cls="justify-center">28/01/2012</HeadCell>
              <HeadCell w={87} cls="justify-center">S-120-251</HeadCell>
              <HeadCell w={93}>CanadainComp...</HeadCell>
              <HeadCell w={87}>Jenck, Ryan</HeadCell>
              <HeadCell w={162}>CanadianCo - Construction</HeadCell>
              <HeadCell w={89}>Construction</HeadCell>
            </div>
          </div>
        </div>
        <div className="h-[5px] shrink-0 bg-[#f4f4f4] flex justify-center">
          <span className="block w-[12px] h-[3px] border-y border-dotted border-[#9a9a9a]" />
        </div>
        <div className="h-[27px] shrink-0 flex items-center pl-[8px] pb-[3px]">
          <span className="w-[94px] shrink-0 text-[11.5px]">Show Charges:</span>
          <Radio on label="Rooms" w={90} />
          <Radio label="Meals" w={84} />
          <Radio label="Wellsite" w={94} />
          <Radio label="Misc Items" w={90} />
        </div>
        <div className="mx-px h-[200px] shrink-0 border border-[#b4bcc4] rounded-t-[2px] bg-[#f4f4f4] px-[5px] pt-[4px] flex flex-col">
          <div className="flex-1 flex min-h-0">
            <div className="w-[608px] shrink-0 bg-white flex flex-col overflow-hidden">
              <div className="h-[30px] shrink-0 flex bg-[#f3f4f6] border-b border-[#cfd3d8]">
                <HeadCell w={16} />
                <div className="w-[368px] shrink-0 border-r-2 border-[#cfd3d8]" />
                <div className="flex-1 flex items-center justify-center">Month of January</div>
              </div>
              <div className="h-[39px] shrink-0 flex bg-[#f3f4f6] border-b border-[#cfd3d8]">
                <HeadCell w={16} />
                <HeadCell w={66} cls="relative pl-[18px]">RM<span className="absolute right-[6px] w-0 h-0 border-x-[4px] border-x-transparent border-b-[4px] border-b-[#222]" /></HeadCell>
                <HeadCell w={202} cls="justify-center">Guest</HeadCell>
                <HeadCell w={83} cls="justify-center">Rate</HeadCell>
                <HeadCell w={17} />
                {[["Sun", 22], ["Mon", 23], ["Tue", 24], ["Wed", 25], ["Thu", 26], ["Fri", 27], ["Sat", 28]].map(([d, n]) => (
                  <div key={d} className="w-[32px] shrink-0 flex flex-col items-center justify-center leading-[13px] border-r border-[#cfd3d8]">
                    <span>{d}</span><span>{n}</span>
                  </div>
                ))}
              </div>
              {charges.map((c) => (
                <div key={c.rm} className={`h-[21px] shrink-0 flex border-b border-[#d8dce0] ${c.current ? "bg-[#eef0f2]" : "bg-white"}`}>
                  <HeadCell w={16} cls="justify-center bg-[#f3f4f6]">{c.current && <Arrow />}</HeadCell>
                  <HeadCell w={66} cls="justify-end">{c.rm}</HeadCell>
                  <HeadCell w={202}>{c.guest}</HeadCell>
                  <HeadCell w={83} cls="justify-end pr-[3px]">$125.00</HeadCell>
                  <HeadCell w={17} />
                  {c.checks.map((k, i) => (
                    <div
                      key={i}
                      className={`w-[32px] shrink-0 flex items-center justify-center border-r border-[#d8dce0] ${c.tint[i] === 1 ? "bg-[#e8b0b0]" : c.tint[i] === 2 ? "bg-[#a8a8a8]" : "bg-white"}`}
                    >
                      <Check on={k} />
                    </div>
                  ))}
                </div>
              ))}
            </div>
            <div className="w-[18px] shrink-0 bg-[#f4f4f4] flex flex-col items-center pt-[6px] pb-[6px]">
              <span className="w-0 h-0 border-x-[4px] border-x-transparent border-b-[4px] border-b-[#888]" />
              <span className="mt-[12px] w-[7px] h-[14px] rounded-[3px] border border-[#aab0b8] bg-[#e8eaee]" />
              <span className="mt-auto w-0 h-0 border-x-[4px] border-x-transparent border-t-[4px] border-t-[#888]" />
            </div>
          </div>
          <div className="h-[17px] shrink-0 flex items-center bg-[#f4f4f4] px-[6px] mb-[5px] mr-[3px]">
            <span className="w-0 h-0 border-y-[4px] border-y-transparent border-r-[4px] border-r-[#888]" />
            <span className="ml-[5px] w-[493px] h-[8px] rounded-[4px] border border-[#a4acb4] bg-[#e4e8ec]" />
            <span className="ml-auto mr-[6px] w-0 h-0 border-y-[4px] border-y-transparent border-l-[4px] border-l-[#888]" />
          </div>
        </div>
        <div className="flex-1 flex gap-[1px] pl-[5px] bg-[#f0f0f0]">
          {[0, 1, 2].map((k) => <div key={k} className="w-[36px] h-[6px] border border-[#1c2c6c]" />)}
        </div>
      </div>
    </div>
  );
}

export default function App() {
  return (
    <div className="relative w-[1600px] h-[861px] overflow-hidden flex flex-col bg-white font-['DejaVu_Sans_Condensed','DejaVu_Sans',sans-serif] [font-stretch:condensed] text-[10.8px] text-[#111]">
      <TitleBar />
      <MenuBar />
      <MainTools />
      <BookingScreen />
      <div className="h-[21px] shrink-0 bg-[#f0eded] border-t border-[#888] flex items-center pl-[4px] pt-[5px] text-[11.5px]">Ready</div>
      <BookingWindow />
      <CheckinWindow />
      <ChargeWindow />
    </div>
  );
}
